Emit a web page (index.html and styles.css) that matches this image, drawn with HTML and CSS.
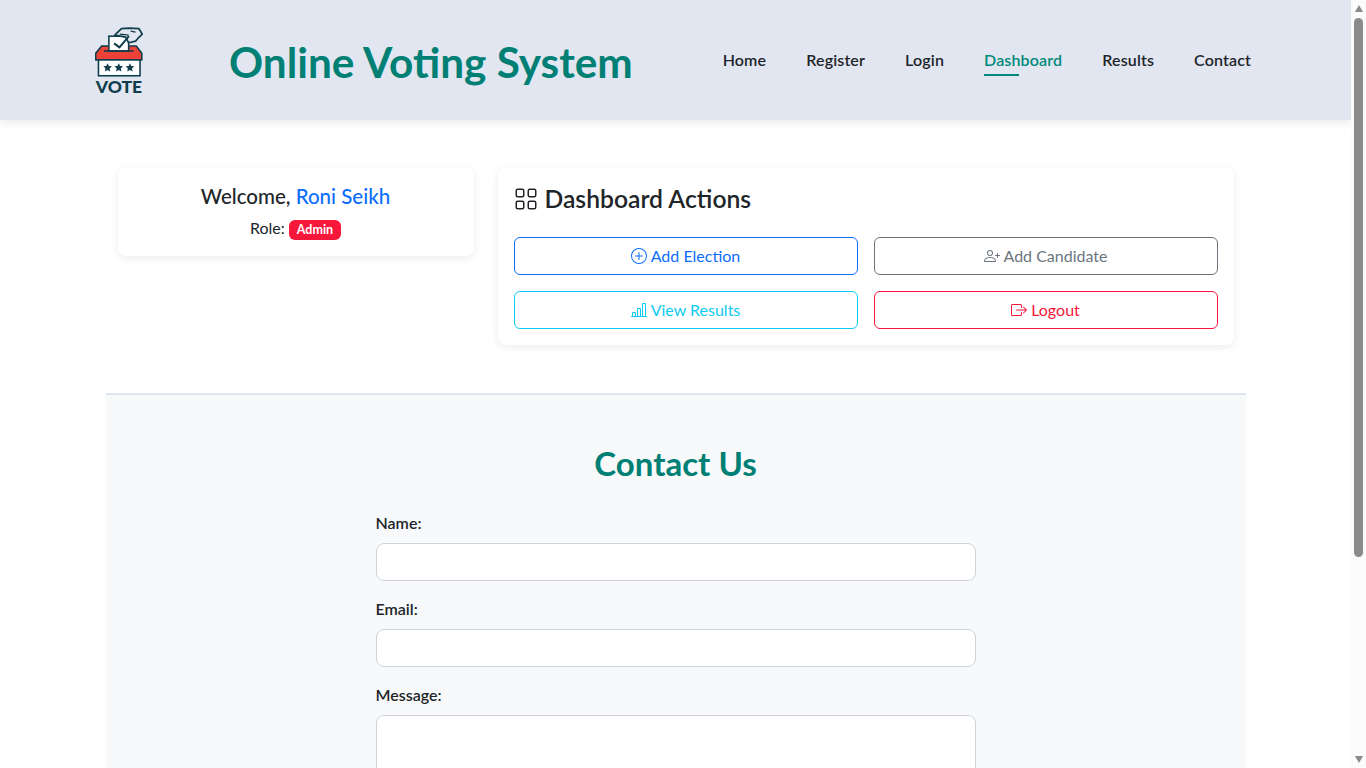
FILE: index.html
```html
<!DOCTYPE html>
<html>
<head>
    <title>Online Voting System</title>
    <link rel="stylesheet" href="styles.css">
</head>
<body>
    <header class="site-header">
        <div class="logo">
            <svg width="48" height="52" viewBox="0 0 48.500 52">
                <!-- box lid -->
                <path d="M6.700 19 H41.700 L47.300 26.300 V33 H.7 V26.300 Z" fill="#ee4238" stroke="#0f3d4c" stroke-width="1.600" stroke-linejoin="round"/>
                <!-- ballot -->
                <rect x="14" y="9" width="20" height="15" fill="#ffffff" stroke="#0f3d4c" stroke-width="1.600"/>
                <path d="M9 24 H39" stroke="#0f3d4c" stroke-width="1.600"/>
                <!-- hand -->
                <path d="M20 8 L26.700 1.300 L35 .9 L44.300 1.300 L47.800 7 L43.300 11.300 L41 14 L34 15.700 L31 10 Z" fill="#e2e6f1" stroke="#0f3d4c" stroke-width="1.700" stroke-linejoin="round"/>
                <path d="M25 7 L34 8 M36 4 L41 5" fill="none" stroke="#0f3d4c" stroke-width="1.300"/>
                <path d="M19.300 16.300 L24.700 20.300 L34.300 9" fill="none" stroke="#0f3d4c" stroke-width="2"/>
                <!-- box body -->
                <rect x="3.500" y="33" width="42" height="16" fill="#ffffff" stroke="#0f3d4c" stroke-width="1.600"/>
                <path id="star" d="M12.700 36.300 L14 39.100 L17 39.500 L14.800 41.600 L15.400 44.800 L12.700 43.200 L10 44.800 L10.600 41.600 L8.400 39.500 L11.400 39.100 Z" fill="#0f3d4c"/>
                <use href="#star" x="11.300"/>
                <use href="#star" x="22.600"/>
            </svg>
            <span class="logo-word">VOTE</span>
        </div>
        <h1 class="site-title">Online Voting System</h1>
        <nav class="site-nav">
            <a href="#">Home</a>
            <a href="#">Register</a>
            <a href="#">Login</a>
            <a href="#" class="active">Dashboard</a>
            <a href="#">Results</a>
            <a href="#">Contact</a>
        </nav>
    </header>

    <main class="container">
        <div class="dash-row">
            <div class="card welcome-card">
                <h2 class="welcome">Welcome, <span class="user-name">Roni Seikh</span></h2>
                <p class="role">Role: <span class="badge">Admin</span></p>
            </div>
            <div class="card actions-card">
                <h3 class="actions-title">
                    <svg width="24" height="24" viewBox="0 0 16 16" fill="currentColor"><path d="M1 2.500A1.500 1.500 0 0 1 2.500 1h3A1.500 1.500 0 0 1 7 2.500v3A1.500 1.500 0 0 1 5.500 7h-3A1.500 1.500 0 0 1 1 5.500v-3zM2.500 2a.5.5 0 0 0-.5.5v3a.5.5 0 0 0 .5.5h3a.5.5 0 0 0 .5-.5v-3a.5.5 0 0 0-.5-.5h-3zm6.500.5A1.500 1.500 0 0 1 10.500 1h3A1.500 1.500 0 0 1 15 2.500v3A1.500 1.500 0 0 1 13.500 7h-3A1.500 1.500 0 0 1 9 5.500v-3zm1.500-.5a.5.5 0 0 0-.5.5v3a.5.5 0 0 0 .5.5h3a.5.5 0 0 0 .5-.5v-3a.5.5 0 0 0-.5-.5h-3zM1 10.500A1.500 1.500 0 0 1 2.500 9h3A1.500 1.500 0 0 1 7 10.500v3A1.500 1.500 0 0 1 5.500 15h-3A1.500 1.500 0 0 1 1 13.500v-3zm1.500-.5a.5.5 0 0 0-.5.5v3a.5.5 0 0 0 .5.5h3a.5.5 0 0 0 .5-.5v-3a.5.5 0 0 0-.5-.5h-3zm6.500.5A1.500 1.500 0 0 1 10.500 9h3a1.500 1.500 0 0 1 1.500 1.500v3a1.500 1.500 0 0 1-1.500 1.500h-3A1.500 1.500 0 0 1 9 13.500v-3zm1.500-.5a.5.5 0 0 0-.5.5v3a.5.5 0 0 0 .5.5h3a.5.5 0 0 0 .5-.5v-3a.5.5 0 0 0-.5-.5h-3z"/></svg>
                    <span>Dashboard Actions</span>
                </h3>
                <div class="action-grid">
                    <a href="#" class="btn btn-blue">
                        <svg width="16" height="16" viewBox="0 0 16 16" fill="currentColor"><path d="M8 15A7 7 0 1 1 8 1a7 7 0 0 1 0 14zm0 1A8 8 0 1 0 8 0a8 8 0 0 0 0 16z"/><path d="M8 4a.5.5 0 0 1 .5.5v3h3a.5.5 0 0 1 0 1h-3v3a.5.5 0 0 1-1 0v-3h-3a.5.5 0 0 1 0-1h3v-3A.5.5 0 0 1 8 4z"/></svg>
                        Add Election
                    </a>
                    <a href="#" class="btn btn-grey">
                        <svg width="16" height="16" viewBox="0 0 16 16" fill="currentColor"><path d="M6 8a3 3 0 1 0 0-6 3 3 0 0 0 0 6zm2-3a2 2 0 1 1-4 0 2 2 0 0 1 4 0zm4 8c0 1-1 1-1 1H1s-1 0-1-1 1-4 6-4 6 3 6 4zm-1-.004c-.001-.246-.154-.986-.832-1.664C9.516 10.680 8.289 10 6 10c-2.290 0-3.516.680-4.168 1.332-.678.678-.830 1.418-.832 1.664h10z"/><path d="M13.500 5a.5.5 0 0 1 .5.5V7h1.500a.5.5 0 0 1 0 1H14v1.500a.5.5 0 0 1-1 0V8h-1.500a.5.5 0 0 1 0-1H13V5.500a.5.5 0 0 1 .5-.5z"/></svg>
                        Add Candidate
                    </a>
                    <a href="#" class="btn btn-cyan">
                        <svg width="16" height="16" viewBox="0 0 16 16" fill="currentColor"><path d="M11 2a1 1 0 0 1 1-1h2a1 1 0 0 1 1 1v12h.5a.5.5 0 0 1 0 1H.5a.5.5 0 0 1 0-1H1v-3a1 1 0 0 1 1-1h2a1 1 0 0 1 1 1v3h1V7a1 1 0 0 1 1-1h2a1 1 0 0 1 1 1v7h1V2zm1 12h2V2h-2v12zm-3 0V7H7v7h2zm-5 0v-3H2v3h2z"/></svg>
                        View Results
                    </a>
                    <a href="#" class="btn btn-red">
                        <svg width="16" height="16" viewBox="0 0 16 16" fill="currentColor"><path d="M10 12.500a.5.5 0 0 1-.5.5h-8a.5.5 0 0 1-.5-.5v-9a.5.5 0 0 1 .5-.5h8a.5.5 0 0 1 .5.5v2a.5.5 0 0 0 1 0v-2A1.500 1.500 0 0 0 9.500 2h-8A1.500 1.500 0 0 0 0 3.500v9A1.500 1.500 0 0 0 1.500 14h8a1.500 1.500 0 0 0 1.500-1.500v-2a.5.5 0 0 0-1 0v2z"/><path d="M15.854 8.354a.5.5 0 0 0 0-.708l-3-3a.5.5 0 0 0-.708.708L14.293 7.500H5.500a.5.5 0 0 0 0 1h8.793l-2.147 2.146a.5.5 0 0 0 .708.708l3-3z"/></svg>
                        Logout
                    </a>
                </div>
            </div>
        </div>

        <section class="contact">
            <h2 class="contact-title">Contact Us</h2>
            <form class="contact-form">
                <label for="name">Name:</label>
                <input type="text" id="name">
                <label for="email">Email:</label>
                <input type="email" id="email">
                <label for="message">Message:</label>
                <textarea id="message" rows="5"></textarea>
            </form>
        </section>
    </main>

    <!-- window scrollbar -->
    <div class="scrollbar">
        <span class="arrow-up"></span>
        <span class="thumb"></span>
        <span class="arrow-down"></span>
    </div>
</body>
</html>
```

FILE: styles.css
```css
* {
    box-sizing: border-box;
}

body {
    font-family: "Lato", "Open Sans", sans-serif;
    font-size: 16px;
    line-height: 1.5;
    color: #212529;
    background-color: #ffffff;
    margin: 0;
    padding-right: 15px;
}

.scrollbar {
    position: fixed;
    top: 0;
    right: 0;
    bottom: 0;
    width: 15px;
    background-color: #fbfbfb;
    display: flex;
    flex-direction: column;
    align-items: center;
    padding: 5px 0;
}

.arrow-up,
.arrow-down {
    width: 0;
    height: 0;
    border-left: 4.5px solid transparent;
    border-right: 4.5px solid transparent;
}

.arrow-up {
    border-bottom: 7px solid #8a8a8a;
    margin-bottom: 6px;
}

.arrow-down {
    border-top: 7px solid #8a8a8a;
    margin-top: auto;
}

.thumb {
    width: 9px;
    height: 539px;
    background-color: #8a8a8a;
    border-radius: 5px;
}

.site-header {
    height: 120px;
    background-color: #e2e6f1;
    box-shadow: 0 2px 10px rgba(0, 0, 0, 0.1);
    display: flex;
    align-items: center;
    padding: 0 100px 0 95px;
}

.logo {
    width: 48px;
    display: flex;
    flex-direction: column;
    align-items: center;
    margin-right: 86px;
    padding-top: 1px;
}

.logo svg {
    display: block;
}

.logo-word {
    font-size: 17.500px;
    line-height: 15px;
    font-weight: 900;
    color: #0f3d4c;
}

.site-title {
    font-size: 42.300px;
    line-height: 48px;
    font-weight: 700;
    color: #008075;
    margin: 4px 0 0;
    flex: 1;
}

.site-nav {
    display: flex;
    gap: 40px;
}

.site-nav a {
    color: #212529;
    font-weight: 600;
    font-size: 16px;
    letter-spacing: 0.15px;
    text-decoration: none;
    position: relative;
}

.site-nav a.active {
    color: #00897b;
}

.site-nav a.active::after {
    content: "";
    position: absolute;
    left: 0;
    bottom: -4px;
    width: 35px;
    height: 2px;
    background-color: #00897b;
}

.container {
    width: 1140px;
    margin: 0 auto;
}

.dash-row {
    display: flex;
    align-items: flex-start;
    gap: 24px;
    padding: 48px 12px;
}

.card {
    background-color: #ffffff;
    border-radius: 8px;
    box-shadow: 0 2px 8px rgba(0, 0, 0, 0.08);
    padding: 16px;
}

.welcome-card {
    width: 356px;
    text-align: center;
}

.welcome {
    font-size: 20.500px;
    line-height: 24px;
    font-weight: 500;
    margin: 0 0 8px;
}

.user-name {
    color: #0d6efd;
}

.role {
    margin: 0;
    font-size: 16px;
    line-height: 24px;
}

.badge {
    display: inline-block;
    background-color: #f6173b;
    color: #ffffff;
    font-size: 12.500px;
    line-height: 12px;
    font-weight: 700;
    padding: 4px 8px;
    border-radius: 6px;
}

.actions-card {
    width: 736px;
}

.actions-title {
    display: flex;
    align-items: center;
    gap: 7px;
    height: 29px;
    font-size: 24.700px;
    line-height: 31px;
    font-weight: 600;
    margin: 0 0 24px;
}

.action-grid {
    display: grid;
    grid-template-columns: 1fr 1fr;
    gap: 16px;
}

.btn {
    display: flex;
    align-items: center;
    justify-content: center;
    gap: 4px;
    height: 38px;
    border: 1px solid;
    border-radius: 6px;
    text-decoration: none;
}

.btn-blue {
    color: #0d6efd;
    border-color: #0d6efd;
}

.btn-grey {
    color: #6c757d;
    border-color: #6c757d;
}

.btn-cyan {
    color: #0dcaf0;
    border-color: #0dcaf0;
}

.btn-red {
    color: #f6173b;
    border-color: #f6173b;
}

.contact {
    background-color: #f8f9fa;
    border-top: 2px solid #dfe4f0;
    padding: 49px 0 60px;
}

.contact-title {
    font-size: 33px;
    line-height: 38px;
    font-weight: 700;
    color: #008075;
    text-align: center;
    margin: 0 0 29px;
}

.contact-form {
    width: 600px;
    margin: 0 auto;
}

.contact-form label {
    display: block;
    font-weight: 600;
    margin-bottom: 8px;
}

.contact-form input,
.contact-form textarea {
    display: block;
    width: 100%;
    height: 38px;
    border: 1px solid #ced4da;
    border-radius: 8px;
    background-color: #ffffff;
    margin-bottom: 16px;
}

.contact-form textarea {
    height: 150px;
    resize: none;
}
```
